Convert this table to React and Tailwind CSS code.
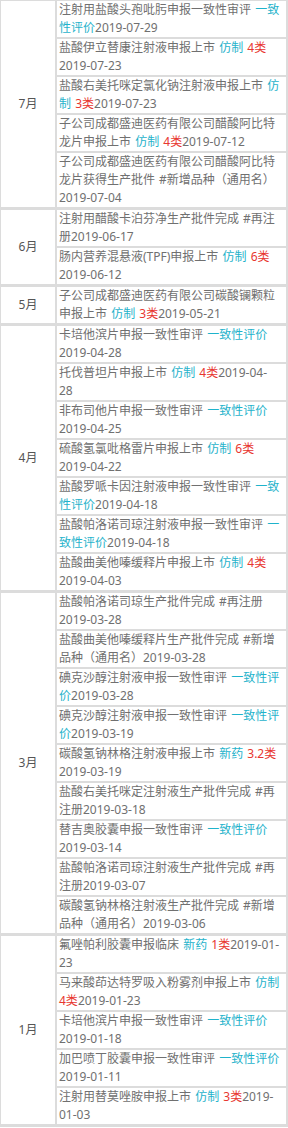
import React from "react";

const T = (t) => ({ t, c: "teal" });
const R = (t) => ({ t, c: "red" });

const groups = [
  {
    m: "7月",
    items: [
      ["注射用盐酸头孢吡肟申报一致性审评 ", T("一致性评价"), "2019-07-29"],
      ["盐酸伊立替康注射液申报上市 ", T("仿制"), " ", R("4类"), "2019-07-23"],
      ["盐酸右美托咪定氯化钠注射液申报上市 ", T("仿制"), " ", R("3类"), "2019-07-23"],
      ["子公司成都盛迪医药有限公司醋酸阿比特龙片申报上市 ", T("仿制"), " ", R("4类"), "2019-07-12"],
      ["子公司成都盛迪医药有限公司醋酸阿比特龙片获得生产批件 #新增品种（通用名）2019-07-04"],
    ],
  },
  {
    m: "6月",
    items: [
      ["注射用醋酸卡泊芬净生产批件完成 #再注册2019-06-17"],
      ["肠内营养混悬液(TPF)申报上市 ", T("仿制"), " ", R("6类"), "2019-06-12"],
    ],
  },
  {
    m: "5月",
    items: [["子公司成都盛迪医药有限公司碳酸镧颗粒申报上市 ", T("仿制"), " ", R("3类"), "2019-05-21"]],
  },
  {
    m: "4月",
    items: [
      ["卡培他滨片申报一致性审评 ", T("一致性评价"), "2019-04-28"],
      ["托伐普坦片申报上市 ", T("仿制"), " ", R("4类"), "2019-04-28"],
      ["非布司他片申报一致性审评 ", T("一致性评价"), "2019-04-25"],
      ["硫酸氢氯吡格雷片申报上市 ", T("仿制"), " ", R("6类"), "2019-04-22"],
      ["盐酸罗哌卡因注射液申报一致性审评 ", T("一致性评价"), "2019-04-18"],
      ["盐酸帕洛诺司琼注射液申报一致性审评 ", T("一致性评价"), "2019-04-18"],
      ["盐酸曲美他嗪缓释片申报上市 ", T("仿制"), " ", R("4类"), "2019-04-03"],
    ],
  },
  {
    m: "3月",
    items: [
      ["盐酸帕洛诺司琼生产批件完成 #再注册2019-03-28"],
      ["盐酸曲美他嗪缓释片生产批件完成 #新增品种（通用名）2019-03-28"],
      ["碘克沙醇注射液申报一致性审评 ", T("一致性评价"), "2019-03-28"],
      ["碘克沙醇注射液申报一致性审评 ", T("一致性评价"), "2019-03-19"],
      ["碳酸氢钠林格注射液申报上市 ", T("新药"), " ", R("3.2类"), "2019-03-19"],
      ["盐酸右美托咪定注射液生产批件完成 #再注册2019-03-18"],
      ["替吉奥胶囊申报一致性审评 ", T("一致性评价"), "2019-03-14"],
      ["盐酸帕洛诺司琼注射液生产批件完成 #再注册2019-03-07"],
      ["碳酸氢钠林格注射液生产批件完成 #新增品种（通用名）2019-03-06"],
    ],
  },
  {
    m: "1月",
    items: [
      ["氟唑帕利胶囊申报临床 ", T("新药"), " ", R("1类"), "2019-01-23"],
      ["马来酸茚达特罗吸入粉雾剂申报上市 ", T("仿制"), " ", R("4类"), "2019-01-23"],
      ["卡培他滨片申报一致性审评 ", T("一致性评价"), "2019-01-18"],
      ["加巴喷丁胶囊申报一致性审评 ", T("一致性评价"), "2019-01-11"],
      ["注射用替莫唑胺申报上市 ", T("仿制"), " ", R("3类"), "2019-01-03"],
    ],
  },
];

function Seg({ s }) {
  if (typeof s === "string") return <>{s}</>;
  if (s.c === "teal") return <span className="text-[#1fb3cb]">{s.t}</span>;
  return <span className="text-[#e8362f]">{s.t}</span>;
}

export default function App() {
  return (
    <div
      className="w-[288px] bg-white text-[12px] leading-[18px] text-[#707070] [word-spacing:1px]"
      style={{ fontFamily: '"Noto Sans", "Noto Sans CJK SC", sans-serif' }}
    >
      <div className="border-l border-r-2 border-t border-[#dcdcdc]">
        {groups.map((g) => (
          <div key={g.m} className="flex border-b-[3px] border-[#dcdcdc]">
            <div className="w-[56px] shrink-0 flex items-center justify-center border-r-2 border-[#dcdcdc] text-[#555]">
              {g.m}
            </div>
            <div className="flex-1 flex flex-col">
              {g.items.map((it, i) => (
                <div
                  key={i}
                  className={
                    "pl-[2px] " + (i > 0 ? "border-t-2 border-[#dcdcdc]" : "")
                  }
                >
                  <div className="w-[221px] break-words">
                    {it.map((s, j) => (
                      <Seg key={j} s={s} />
                    ))}
                  </div>
                </div>
              ))}
            </div>
          </div>
        ))}
      </div>
    </div>
  );
}
